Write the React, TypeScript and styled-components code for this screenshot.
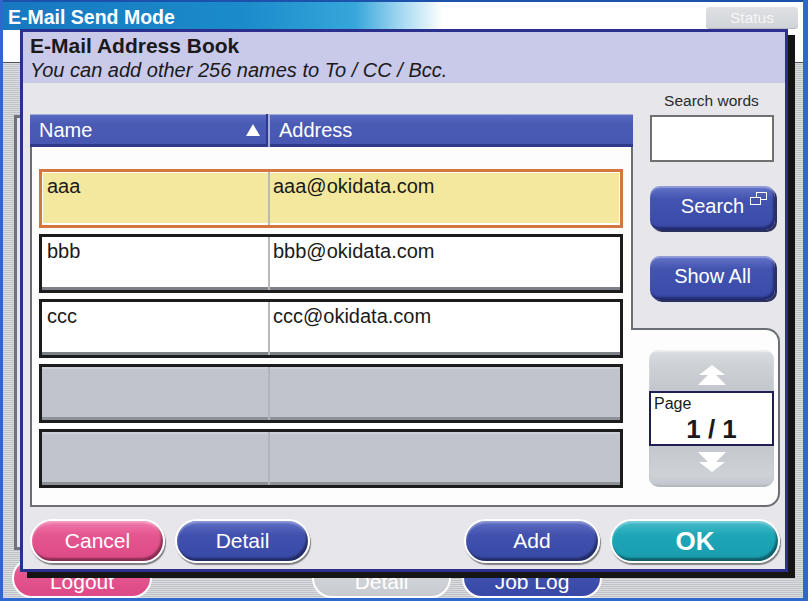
import styled, { createGlobalStyle, css } from "styled-components";

type RowKind = "selected" | "filled" | "empty";
type Tone = "pink" | "blue" | "teal" | "grey";

interface Entry {
  name: string;
  address: string;
  kind: RowKind;
}

const entries: Entry[] = [
  { name: "aaa", address: "aaa@okidata.com", kind: "selected" },
  { name: "bbb", address: "bbb@okidata.com", kind: "filled" },
  { name: "ccc", address: "ccc@okidata.com", kind: "filled" },
  { name: "", address: "", kind: "empty" },
  { name: "", address: "", kind: "empty" },
];

const GlobalStyle = createGlobalStyle`
  html, body {
    margin: 0;
    padding: 0;
    background: #fff;
  }

  body {
    font-family: "Liberation Sans", Arial, sans-serif;
  }

  * {
    box-sizing: border-box;
  }
`;

const tones: Record<Tone, string> = {
  pink: "linear-gradient(180deg, #f07aac 0%, #e4568f 35%, #dd4a86 100%)",
  blue: "linear-gradient(180deg, #6070c6 0%, #4151ad 35%, #3848a6 100%)",
  teal: "linear-gradient(180deg, #48bccb 0%, #1ea6b6 35%, #189cad 100%)",
  grey: "linear-gradient(180deg, #e2e4e7 0%, #d0d3d7 40%, #c8cbd0 100%)",
};

/* ---------- background screen ---------- */

const Screen = styled.div`
  position: relative;
  width: 808px;
  height: 601px;
  display: flex;
  flex-direction: column;
  border-left: 3px solid #2f68cc;
  border-right: 5px solid #2f68cc;
  border-bottom: 3px solid #2f68cc;
  background: #fff;
  overflow: hidden;
`;

const TitleBar = styled.div`
  height: 30px;
  flex-shrink: 0;
  display: flex;
  align-items: center;
  justify-content: space-between;
  padding: 0 5px 0 5px;
  border-top: 2px solid #1c52ac;
  background: linear-gradient(
    90deg,
    #1778c0 0%,
    #1b8bcb 30%,
    #37a6da 44%,
    #a8daf2 50%,
    #ffffff 55%
  );
`;

const TitleText = styled.div`
  color: #fff;
  font-weight: bold;
  font-size: 19.5px;
  line-height: 22px;
  padding-top: 1px;
`;

const StatusButton = styled.div`
  width: 92px;
  height: 22px;
  margin-top: 4px;
  border-radius: 4px;
  background: linear-gradient(180deg, #dfe1e4, #cfd2d6);
  box-shadow: inset 0 -1px 0 #b8bbc0;
  color: #f6f6f6;
  font-size: 15.5px;
  line-height: 22px;
  text-align: center;
`;

const WhiteStrip = styled.div`
  height: 33px;
  flex-shrink: 0;
  background: #fff;
  border-bottom: 1px solid #4e5258;
`;

const Striped = styled.div`
  flex: 1;
  display: flex;
  flex-direction: column;
  background: repeating-linear-gradient(
    180deg,
    #dadcdf 0px,
    #dadcdf 1px,
    #bfc2c6 1px,
    #bfc2c6 2px
  );
`;

const BgPanel = styled.div`
  margin: 52px 0 0 11px;
  width: 720px;
  height: 435px;
  border-left: 3px solid #6f7378;
  border-top: 3px solid #6f7378;
  border-bottom: 3px solid #6f7378;
  background: #e6e6ea;
`;

const BgButtons = styled.div`
  display: flex;
  margin: 8px 0 0 9px;
  gap: 11px;
`;

const BgPill = styled.div<{ $tone: Tone; $w: number; $ml?: number }>`
  width: ${(p) => p.$w}px;
  height: 40px;
  margin-left: ${(p) => p.$ml ?? 0}px;
  border: 2px solid #fff;
  border-radius: 20px;
  background: ${(p) => tones[p.$tone]};
  color: #fff;
  font-size: 21px;
  line-height: 44px;
  text-align: center;
`;

/* ---------- dialog ---------- */

const Dialog = styled.div`
  position: absolute;
  left: 17px;
  top: 29px;
  width: 768px;
  height: 543px;
  display: flex;
  flex-direction: column;
  border: 3px solid #2b2f8d;
  background: #e6e6eb;
  box-shadow: 7px 6px 0 #151515;
`;

const DialogHeader = styled.div`
  height: 51px;
  flex-shrink: 0;
  padding: 2px 0 0 7px;
  background: #c9c9ea;
  color: #1a1a1a;
`;

const DialogTitle = styled.div`
  font-size: 21px;
  font-weight: bold;
  line-height: 24px;
`;

const DialogSub = styled.div`
  font-size: 20px;
  font-style: italic;
  line-height: 24px;
`;

const Body = styled.div`
  flex: 1;
  display: flex;
  flex-direction: column;
  padding: 0 5px 6px 7px;
`;

const MainGrid = styled.div`
  display: grid;
  grid-template-columns: 603px 147px;
  height: 424px;
`;

const LeftCol = styled.div`
  padding-top: 31px;
`;

const TablePanel = styled.div`
  height: 393px;
  display: flex;
  flex-direction: column;
`;

const TableHead = styled.div`
  height: 33px;
  flex-shrink: 0;
  display: flex;
  color: #fff;
  font-size: 20px;
`;

const HeadCell = styled.div<{ $first?: boolean }>`
  display: flex;
  align-items: center;
  justify-content: space-between;
  padding: 0 6px 1px 9px;
  background: linear-gradient(180deg, #5a6bc2 0%, #4a5bb5 30%, #4656b2 100%);
  box-shadow: inset 0 1px 0 #a2acde, inset 0 -3px 0 #2e398c;
  ${(p) =>
    p.$first
      ? css`
          width: 238px;
          border-right: 2px solid #2e398c;
        `
      : css`
          flex: 1;
          border-left: 2px solid #a7b0dc;
        `}
`;

const RowsArea = styled.div`
  flex: 1;
  display: flex;
  flex-direction: column;
  gap: 6px;
  padding: 22px 8px 0 7px;
  background: #fdfdfd;
  border: 2px solid #6b6f75;
  border-top: none;
`;

const rowLooks: Record<RowKind, ReturnType<typeof css>> = {
  selected: css`
    border-color: #d6763f;
    background: #f4e89e;
    box-shadow: inset 0 0 0 1px #fff, inset 0 -2px 0 #fff;
  `,
  filled: css`
    border-color: #1c1c1c;
    background: #fff;
    box-shadow: inset 0 -3px 0 #7d8187;
  `,
  empty: css`
    border-color: #1c1c1c;
    background: #c1c4cb;
    box-shadow: inset 0 2px 0 #ccd0d6, inset 0 -3px 0 #8e9197;
  `,
};

const Row = styled.div<{ $kind: RowKind }>`
  height: 59px;
  flex-shrink: 0;
  display: flex;
  border: 3px solid;
  ${(p) => rowLooks[p.$kind]}
`;

const Cell = styled.div<{ $name?: boolean; $kind: RowKind }>`
  padding: 2px 0 0 ${(p) => (p.$name ? 5 : 3)}px;
  font-size: 20px;
  line-height: 24px;
  color: #1a1a1a;
  ${(p) =>
    p.$name
      ? css`
          width: 228px;
          border-right: 2px solid
            ${p.$kind === "empty" ? "#b1b4ba" : "#b9b9b9"};
        `
      : css`
          flex: 1;
        `}
`;

const RightCol = styled.div`
  display: flex;
  flex-direction: column;
  padding-top: 9px;
`;

const SearchBlock = styled.div`
  padding-left: 17px;
  display: flex;
  flex-direction: column;
  align-items: flex-start;
`;

const SearchLabel = styled.div`
  width: 123px;
  text-align: center;
  font-size: 15.5px;
  line-height: 18px;
  color: #2a2a2a;
`;

const SearchInput = styled.input`
  margin-top: 5px;
  width: 124px;
  height: 47px;
  border: 2px solid #707070;
  background: #fff;
  padding: 0 4px;
  font: inherit;
  outline: none;
`;

const SideButton = styled.div<{ $gap: number }>`
  position: relative;
  margin-top: ${(p) => p.$gap}px;
  width: 125px;
  height: 44px;
  border-radius: 10px;
  background: linear-gradient(180deg, #6575c9 0%, #4353b0 30%, #3a4aa8 100%);
  box-shadow: inset 0 2px 1px rgba(255, 255, 255, 0.3),
    inset -2px -3px 2px rgba(14, 18, 70, 0.55), 2px 2px 0 #2c305e;
  color: #fff;
  font-size: 20px;
  line-height: 40px;
  text-align: center;
`;

const WindowIcon = styled.svg`
  position: absolute;
  top: 6px;
  right: 8px;
`;

const PagePanel = styled.div`
  margin: 28px 0 0 -2px;
  width: 149px;
  height: 179px;
  padding: 20px 0 0 18px;
  background: #fdfdfd;
  border: 2px solid #6b6f75;
  border-left: none;
  border-radius: 0 14px 14px 0;
`;

const PageControl = styled.div`
  width: 125px;
  height: 137px;
  display: flex;
  flex-direction: column;
  border-radius: 10px;
  overflow: hidden;
  background: #c6cad0;
`;

const ArrowButton = styled.div<{ $down?: boolean }>`
  height: 41px;
  display: flex;
  justify-content: center;
  align-items: ${(p) => (p.$down ? "flex-start" : "flex-end")};
  padding: ${(p) => (p.$down ? "6px 0 0" : "0 0 6px")};
  background: ${(p) =>
    p.$down
      ? "linear-gradient(180deg, #c4c8ce 0%, #ced1d6 70%, #c2c6cc 100%)"
      : "linear-gradient(180deg, #dadde1 0%, #cdd0d5 40%, #c3c7cd 100%)"};
  box-shadow: ${(p) =>
    p.$down
      ? "inset 0 -2px 2px rgba(0,0,0,0.08)"
      : "inset 0 2px 2px rgba(255,255,255,0.6)"};
`;

const PageBox = styled.div`
  height: 55px;
  flex-shrink: 0;
  padding: 2px 0 0 3px;
  background: #fff;
  border: 2px solid #1f1f55;
  color: #1a1a1a;
`;

const PageLabel = styled.div`
  font-size: 16px;
  line-height: 18px;
`;

const PageNumber = styled.div`
  margin-top: 2px;
  padding-right: 3px;
  font-size: 26px;
  font-weight: bold;
  line-height: 28px;
  text-align: center;
`;

const ButtonRow = styled.div`
  margin-top: 12px;
  height: 44px;
  display: flex;
  align-items: center;
  gap: 10px;
`;

const Spacer = styled.div`
  flex: 1;
`;

const Pill = styled.div<{ $tone: Tone; $w: number; $bold?: boolean }>`
  width: ${(p) => p.$w}px;
  height: 44px;
  border: 2px solid #fff;
  border-radius: 22px;
  background: ${(p) => tones[p.$tone]};
  box-shadow: inset -2px -3px 2px rgba(0, 0, 0, 0.4),
    inset 0 2px 2px rgba(255, 255, 255, 0.3), 1px 2px 1px rgba(0, 0, 0, 0.45);
  color: #fff;
  font-size: ${(p) => (p.$bold ? 26 : 21)}px;
  font-weight: ${(p) => (p.$bold ? "bold" : "normal")};
  line-height: 40px;
  text-align: center;
`;

const SortArrow = () => (
  <svg width="14" height="12" viewBox="0 0 14 12">
    <polygon points="7,0 14,12 0,12" fill="#fff" />
  </svg>
);

const DoubleArrow = ({ down }: { down?: boolean }) => (
  <svg
    width="30"
    height="20"
    viewBox="0 0 30 20"
    style={down ? { transform: "scaleY(-1)" } : undefined}
  >
    <polygon points="15,0 28,10 2,10" fill="#fff" />
    <polygon points="15,6 29,20 1,20" fill="#fff" />
  </svg>
);

const App = () => {
  return (
    <>
      <GlobalStyle />
      <Screen>
        <TitleBar>
          <TitleText>E-Mail Send Mode</TitleText>
          <StatusButton>Status</StatusButton>
        </TitleBar>
        <WhiteStrip />
        <Striped>
          <BgPanel />
          <BgButtons>
            <BgPill $tone="pink" $w={140}>
              Logout
            </BgPill>
            <BgPill $tone="grey" $w={139} $ml={149}>
              Detail
            </BgPill>
            <BgPill $tone="blue" $w={140}>
              Job Log
            </BgPill>
          </BgButtons>
        </Striped>

        <Dialog>
          <DialogHeader>
            <DialogTitle>E-Mail Address Book</DialogTitle>
            <DialogSub>You can add other 256 names to To / CC / Bcc.</DialogSub>
          </DialogHeader>

          <Body>
            <MainGrid>
              <LeftCol>
                <TablePanel>
                  <TableHead>
                    <HeadCell $first>
                      <span>Name</span>
                      <SortArrow />
                    </HeadCell>
                    <HeadCell>Address</HeadCell>
                  </TableHead>
                  <RowsArea>
                    {entries.map((e, i) => (
                      <Row key={i} $kind={e.kind}>
                        <Cell $name $kind={e.kind}>
                          {e.name}
                        </Cell>
                        <Cell $kind={e.kind}>{e.address}</Cell>
                      </Row>
                    ))}
                  </RowsArea>
                </TablePanel>
              </LeftCol>

              <RightCol>
                <SearchBlock>
                  <SearchLabel>Search words</SearchLabel>
                  <SearchInput readOnly value="" />
                  <SideButton $gap={24}>
                    Search
                    <WindowIcon width="17" height="14" viewBox="0 0 17 14">
                      <rect x="6.5" y="0.5" width="10" height="7" fill="none" stroke="#fff" />
                      <rect x="0.5" y="5.5" width="10" height="7" fill="#4454b0" stroke="#fff" />
                    </WindowIcon>
                  </SideButton>
                  <SideButton $gap={26}>Show All</SideButton>
                </SearchBlock>
                <PagePanel>
                  <PageControl>
                    <ArrowButton>
                      <DoubleArrow />
                    </ArrowButton>
                    <PageBox>
                      <PageLabel>Page</PageLabel>
                      <PageNumber>1 / 1</PageNumber>
                    </PageBox>
                    <ArrowButton $down>
                      <DoubleArrow down />
                    </ArrowButton>
                  </PageControl>
                </PagePanel>
              </RightCol>
            </MainGrid>

            <ButtonRow>
              <Pill $tone="pink" $w={135}>
                Cancel
              </Pill>
              <Pill $tone="blue" $w={135}>
                Detail
              </Pill>
              <Spacer />
              <Pill $tone="blue" $w={136}>
                Add
              </Pill>
              <Pill $tone="teal" $w={170} $bold>
                OK
              </Pill>
            </ButtonRow>
          </Body>
        </Dialog>
      </Screen>
    </>
  );
};

export default App;
